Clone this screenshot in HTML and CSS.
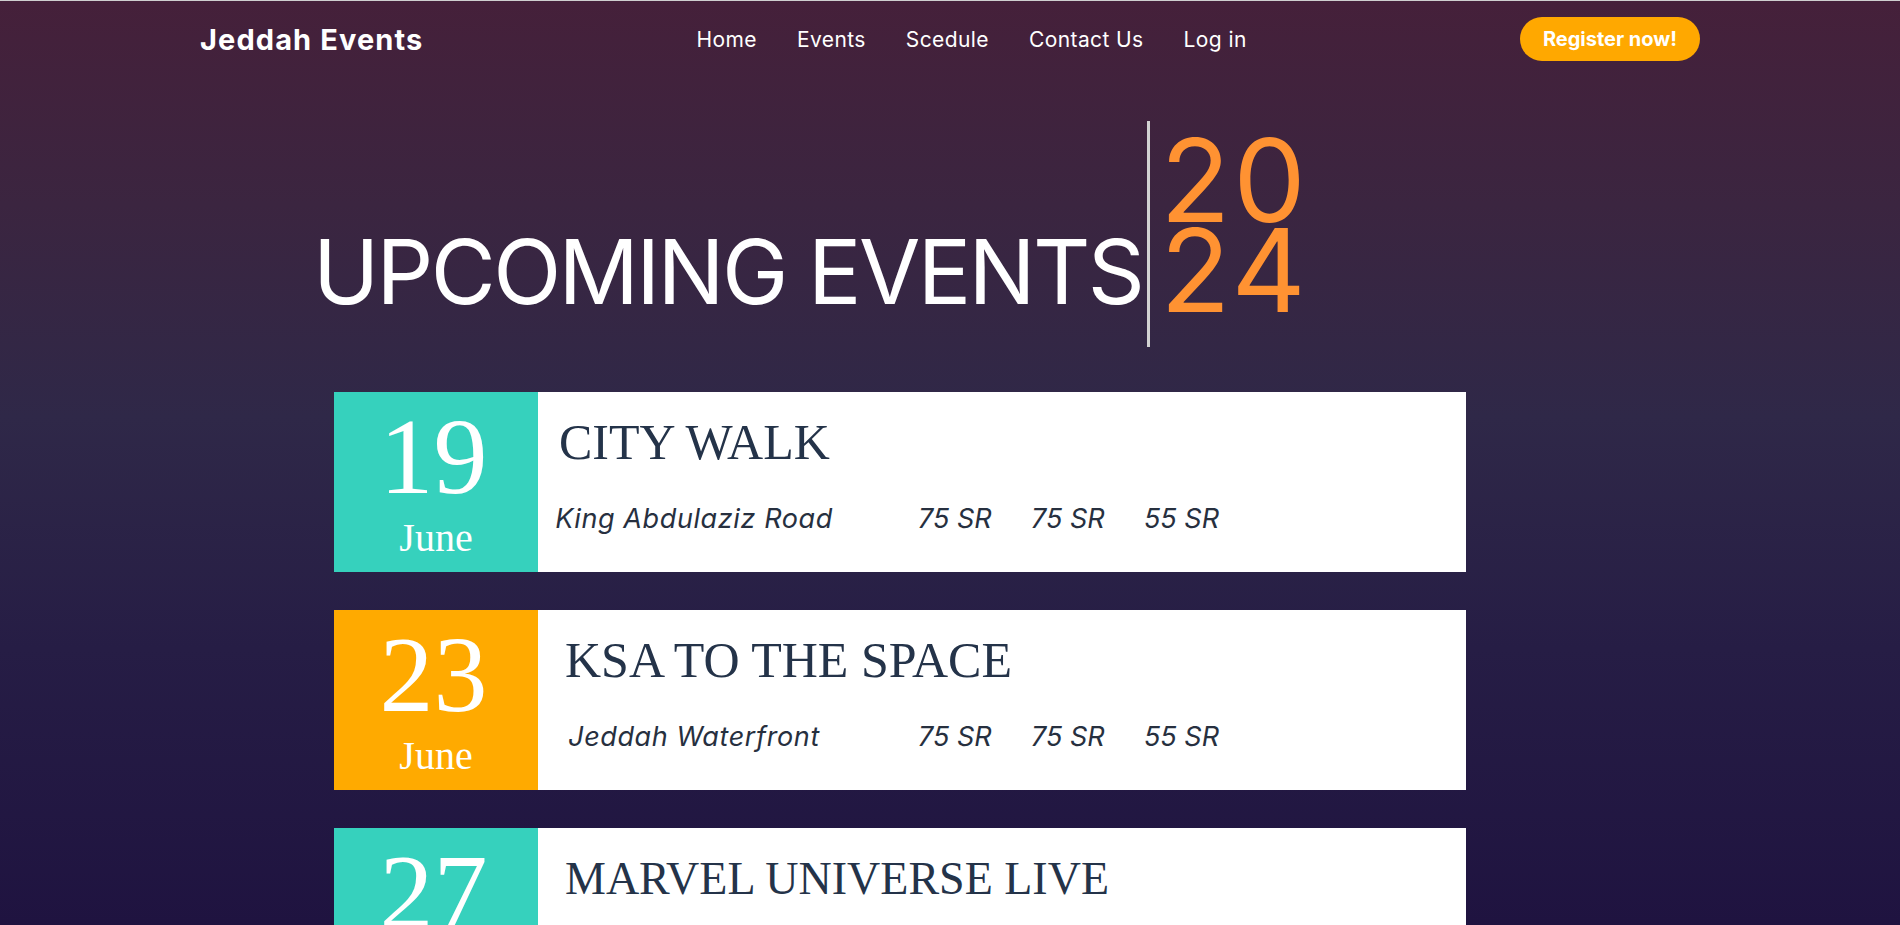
FILE: index.html
```html
<!DOCTYPE html>
<html lang="en">
<head>
<meta charset="utf-8">
<title>Jeddah Events</title>
<link rel="stylesheet" href="styles.css">
</head>
<body>
<div class="page">
  <header class="topbar">
    <a class="logo" href="#">Jeddah Events</a>
    <nav class="nav">
      <a href="#">Home</a>
      <a href="#">Events</a>
      <a href="#">Scedule</a>
      <a href="#">Contact Us</a>
      <a href="#">Log in</a>
    </nav>
    <a class="btn-register" href="#">Register now!</a>
  </header>

  <main class="content">
    <section class="hero">
      <h1 class="hero-title">UPCOMING EVENTS</h1>
      <div class="hero-year"><span>20</span><span>24</span></div>
    </section>

    <section class="events">
      <article class="event">
        <div class="event-date date-teal"><span class="day">19</span><span class="month">June</span></div>
        <div class="event-body">
          <h2 class="event-title">CITY WALK</h2>
          <div class="event-info">
            <span class="event-place">King Abdulaziz Road</span>
            <span class="price price-first">75 SR</span>
            <span class="price">75 SR</span>
            <span class="price">55 SR</span>
          </div>
        </div>
      </article>

      <article class="event">
        <div class="event-date date-orange"><span class="day">23</span><span class="month">June</span></div>
        <div class="event-body">
          <h2 class="event-title">KSA TO THE SPACE</h2>
          <div class="event-info">
            <span class="event-place">Jeddah Waterfront</span>
            <span class="price price-first">75 SR</span>
            <span class="price">75 SR</span>
            <span class="price">55 SR</span>
          </div>
        </div>
      </article>

      <article class="event">
        <div class="event-date date-teal"><span class="day">27</span><span class="month">June</span></div>
        <div class="event-body">
          <h2 class="event-title event-title-long">MARVEL UNIVERSE LIVE</h2>
          <div class="event-info">
            <span class="event-place">Jeddah Superdome</span>
            <span class="price price-first">75 SR</span>
            <span class="price">75 SR</span>
            <span class="price">55 SR</span>
          </div>
        </div>
      </article>
    </section>
  </main>
</div>
</body>
</html>
```

FILE: styles.css
```css
* {
  box-sizing: border-box;
}

html, body {
  margin: 0;
  padding: 0;
}

body {
  font-family: Inter, "Liberation Sans", sans-serif;
  background: #1f1340;
}

.page {
  min-height: 925px;
  border-top: 1px solid #cfcfcf;
  background: linear-gradient(180deg, #45203a 0%, #3b2540 22%, #2f2848 45%, #261d45 70%, #1f1340 100%) top / 100% 925px no-repeat, #1f1340;
  padding-bottom: 60px;
}

.topbar {
  width: 1500px;
  margin: 0 auto;
  padding: 16px 0;
  display: flex;
  align-items: center;
  justify-content: space-between;
}

.logo {
  color: #ffffff;
  text-decoration: none;
  font-weight: 700;
  font-size: 29px;
  letter-spacing: 1.1px;
}

.nav {
  display: flex;
  align-items: center;
}

.nav a {
  color: #ffffff;
  text-decoration: none;
  font-size: 21px;
  font-weight: 400;
  letter-spacing: 0.4px;
  padding: 0 20px;
}

.btn-register {
  display: flex;
  align-items: center;
  justify-content: center;
  width: 180px;
  height: 44px;
  border-radius: 22px;
  background: #ffa800;
  color: #ffffff;
  font-weight: 700;
  font-size: 20px;
  text-decoration: none;
  letter-spacing: 0;
}

.content {
  width: 1500px;
  margin: 0 auto;
}

.hero {
  display: flex;
  align-items: flex-end;
  margin-top: 44px;
  margin-left: 113px;
}

.hero-title {
  margin: 0 5px 31px 0;
  color: #ffffff;
  font-weight: 400;
  font-size: 89px;
  line-height: 1;
  letter-spacing: -2.65px;
}

.hero-year {
  display: flex;
  flex-direction: column;
  border-left: 3px solid #d2d2d2;
  padding: 15px 0 31px 10px;
  color: #ff9232;
  font-size: 115px;
  font-weight: 400;
  line-height: 90px;
  letter-spacing: 3px;
}

.events {
  margin-top: 45px;
  margin-left: 134px;
  display: flex;
  flex-direction: column;
  gap: 38px;
}

.event {
  display: flex;
  width: 1132px;
  height: 180px;
  background: #ffffff;
}

.event-date {
  width: 204px;
  flex: none;
  display: flex;
  flex-direction: column;
  align-items: center;
  padding-top: 7px;
  color: #ffffff;
  font-family: "Liberation Serif", "Times New Roman", serif;
}

.date-teal {
  background: #36d1bd;
}

.date-orange {
  background: #ffaa00;
}

.day {
  font-size: 108px;
  line-height: 115px;
  padding-right: 5px;
}

.month {
  font-size: 40px;
  line-height: 40px;
  margin-top: 4px;
}

.event-body {
  flex: 1;
  padding-top: 22px;
}

.event-title {
  margin: 0 0 0 27px;
  font-family: "Liberation Serif", "Times New Roman", serif;
  font-weight: 400;
  font-size: 50px;
  line-height: 57.5px;
  color: #243349;
}

.event:first-child .event-title {
  margin-left: 21px;
}

.event-title-long {
  font-size: 46px;
}

.event-info {
  display: flex;
  align-items: baseline;
  margin-top: 31px;
  padding-left: 10px;
  font-style: italic;
  font-size: 27px;
  line-height: 1.2;
  color: #27303f;
}

.event-place {
  width: 292px;
  text-align: center;
  letter-spacing: 0.6px;
  white-space: nowrap;
}

.price {
  width: 113px;
}

.price-first {
  margin-left: 78px;
}
```
